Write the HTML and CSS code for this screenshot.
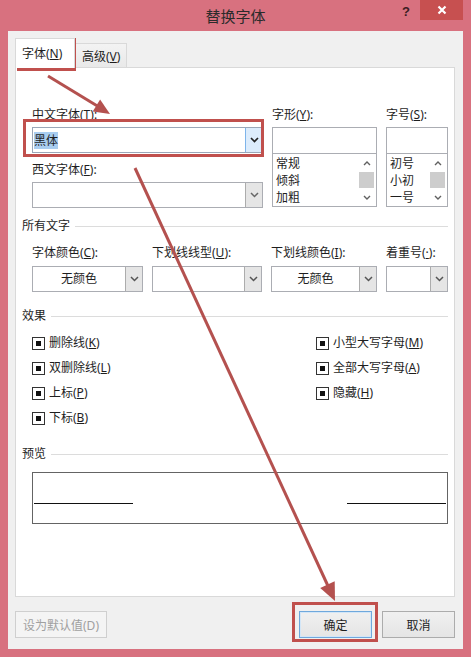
FILE: index.html
```html
<!DOCTYPE html>
<html lang="zh-CN">
<head>
  <meta charset="UTF-8" />
  <title>替换字体</title>
  <link rel="stylesheet" href="styles.css">
</head>
<body>

<div class="window">
  <div class="title-bar">
    <span></span>
    <span class="title">替换字体</span>
    <div class="controls">
      <span class="help">?</span>
      <span class="close">
        <svg width="10" height="10" viewBox="0 0 10 10"><path d="M1.5 1.5l7 7M8.5 1.5l-7 7" stroke="#fff" stroke-width="2.2"/></svg>
      </span>
    </div>
  </div>

  <div class="client">
    <div class="tabs">
      <div class="tab active">字体(<u>N</u>)</div>
      <div class="tab">高级(<u>V</u>)</div>
    </div>

    <div class="panel">
      <!-- police -->
      <div class="font-grid">
        <div class="col">
          <label>中文字体(<u>T</u>):</label>
          <div class="combo focus">
            <span class="val left"><span class="sel">黑体</span></span>
            <span class="arrow"><svg width="9" height="6" viewBox="0 0 9 6"><path d="M1 1l3.5 3.5L8 1" fill="none" stroke="#222" stroke-width="1.7"/></svg></span>
          </div>
          <label class="second">西文字体(<u>F</u>):</label>
          <div class="combo">
            <span class="val"></span>
            <span class="arrow"><svg width="9" height="6" viewBox="0 0 9 6"><path d="M1 1l3.5 3.5L8 1" fill="none" stroke="#666" stroke-width="1.5"/></svg></span>
          </div>
        </div>
        <div class="col">
          <label>字形(<u>Y</u>):</label>
          <div class="field"></div>
          <div class="list">
            <ul>
              <li>常规</li>
              <li>倾斜</li>
              <li>加粗</li>
            </ul>
            <div class="scroll">
              <span class="up"><svg width="8" height="5" viewBox="0 0 8 5"><path d="M1 4l3-3 3 3" fill="none" stroke="#606060" stroke-width="1.4"/></svg></span>
              <span class="thumb"></span>
              <span class="down"><svg width="8" height="5" viewBox="0 0 8 5"><path d="M1 1l3 3 3-3" fill="none" stroke="#606060" stroke-width="1.4"/></svg></span>
            </div>
          </div>
        </div>
        <div class="col">
          <label>字号(<u>S</u>):</label>
          <div class="field"></div>
          <div class="list">
            <ul>
              <li>初号</li>
              <li>小初</li>
              <li>一号</li>
            </ul>
            <div class="scroll">
              <span class="up"><svg width="8" height="5" viewBox="0 0 8 5"><path d="M1 4l3-3 3 3" fill="none" stroke="#606060" stroke-width="1.4"/></svg></span>
              <span class="thumb"></span>
              <span class="down"><svg width="8" height="5" viewBox="0 0 8 5"><path d="M1 1l3 3 3-3" fill="none" stroke="#606060" stroke-width="1.4"/></svg></span>
            </div>
          </div>
        </div>
      </div>

      <!-- tout le texte -->
      <div class="section">所有文字</div>
      <div class="color-grid">
        <div class="col">
          <label>字体颜色(<u>C</u>):</label>
          <div class="combo">
            <span class="val">无颜色</span>
            <span class="arrow"><svg width="9" height="6" viewBox="0 0 9 6"><path d="M1 1l3.5 3.5L8 1" fill="none" stroke="#555" stroke-width="1.5"/></svg></span>
          </div>
        </div>
        <div class="col">
          <label>下划线线型(<u>U</u>):</label>
          <div class="combo">
            <span class="val"></span>
            <span class="arrow"><svg width="9" height="6" viewBox="0 0 9 6"><path d="M1 1l3.5 3.5L8 1" fill="none" stroke="#555" stroke-width="1.5"/></svg></span>
          </div>
        </div>
        <div class="col">
          <label>下划线颜色(<u>I</u>):</label>
          <div class="combo">
            <span class="val">无颜色</span>
            <span class="arrow"><svg width="9" height="6" viewBox="0 0 9 6"><path d="M1 1l3.5 3.5L8 1" fill="none" stroke="#555" stroke-width="1.5"/></svg></span>
          </div>
        </div>
        <div class="col">
          <label>着重号(<u>·</u>):</label>
          <div class="combo">
            <span class="val"></span>
            <span class="arrow"><svg width="9" height="6" viewBox="0 0 9 6"><path d="M1 1l3.5 3.5L8 1" fill="none" stroke="#555" stroke-width="1.5"/></svg></span>
          </div>
        </div>
      </div>

      <!-- effets -->
      <div class="section">效果</div>
      <div class="checks">
        <div class="check"><span class="box"></span><span>删除线(<u>K</u>)</span></div>
        <div class="check"><span class="box"></span><span>双删除线(<u>L</u>)</span></div>
        <div class="check"><span class="box"></span><span>上标(<u>P</u>)</span></div>
        <div class="check"><span class="box"></span><span>下标(<u>B</u>)</span></div>
        <div class="check"><span class="box"></span><span>小型大写字母(<u>M</u>)</span></div>
        <div class="check"><span class="box"></span><span>全部大写字母(<u>A</u>)</span></div>
        <div class="check"><span class="box"></span><span>隐藏(<u>H</u>)</span></div>
      </div>

      <!-- apercu -->
      <div class="section">预览</div>
      <div class="preview">
        <span class="rule"></span>
        <span class="rule"></span>
      </div>
    </div>

    <div class="buttons">
      <button class="btn disabled">设为默认值(D)</button>
      <span class="spacer"></span>
      <button class="btn default">确定</button>
      <button class="btn">取消</button>
    </div>
  </div>

  <!-- annotations -->
  <svg class="marks" width="471" height="657" viewBox="0 0 471 657">
    <g fill="none" stroke="#c0504d" stroke-width="3">
      <rect x="18.5" y="39.5" width="56" height="30"/>
      <rect x="24.5" y="120.5" width="238" height="35"/>
      <rect x="293.5" y="603.5" width="83" height="37"/>
    </g>
    <g stroke="#b4514f" stroke-width="3" fill="#b4514f">
      <line x1="48" y1="76" x2="99" y2="107"/>
      <polygon points="110,114 92.7,111.6 100.1,99.6" stroke="none"/>
      <line x1="135" y1="168" x2="328" y2="586"/>
      <polygon points="335,601 320.2,588 334.7,581.3" stroke="none"/>
    </g>
  </svg>
</div>

</body>
</html>
```

FILE: styles.css
```css
body {
  margin: 0;
  background: #d8717f;
  font-family: "Noto Sans", "Noto Sans CJK SC", sans-serif;
  font-size: 12px;
  color: #1e1e1e;
}
u {
  text-decoration: underline;
  text-underline-offset: 1px;
}
.window {
  position: relative;
  width: 471px;
  height: 657px;
  display: flex;
  flex-direction: column;
}
.title-bar {
  height: 31px;
  flex: none;
  display: grid;
  grid-template-columns: 1fr auto 1fr;
}
.title {
  align-self: center;
  font-size: 15px;
  color: #2b2b2b;
}
.controls {
  justify-self: end;
  align-self: start;
  display: flex;
  margin-right: 8px;
}
.help {
  width: 28px;
  height: 20px;
  line-height: 24px;
  text-align: center;
  font-family: "Liberation Sans", sans-serif;
  font-weight: bold;
  font-size: 13px;
  color: #3b1c22;
}
.close {
  width: 43px;
  height: 20px;
  background: #c75050;
  display: flex;
  align-items: center;
  justify-content: center;
}
.client {
  flex: 1;
  margin: 0 8px 8px;
  background: #f0f0f0;
  padding: 7px 8px 0 7px;
}

/* onglets */
.tabs {
  display: flex;
  align-items: flex-end;
  height: 29px;
}
.tab {
  height: 24px;
  line-height: 26px;
  padding: 0 6px;
  border: 1px solid #d9d9d9;
  border-bottom: none;
  background: linear-gradient(#f3f3f3, #e9e9e9);
  box-sizing: border-box;
}
.tab.active {
  position: relative;
  z-index: 1;
  height: 30px;
  margin-bottom: -1px;
  width: 60px;
  line-height: 30px;
  background: #fff;
}
.panel {
  height: 530px;
  box-sizing: border-box;
  border: 1px solid #d9d9d9;
  background: #fff;
  padding: 0 6px;
}
label {
  display: block;
  line-height: 16px;
  height: 16px;
  white-space: nowrap;
}

/* police */
.font-grid {
  margin: 39px 0 0 10px;
  display: grid;
  grid-template-columns: 231px 105px 62px;
  column-gap: 9px;
}
.font-grid label {
  margin-bottom: 4px;
}
.font-grid label.second {
  margin-top: 9px;
}
.combo {
  height: 26px;
  box-sizing: border-box;
  border: 1px solid #abadb3;
  background: #fff;
  display: flex;
}
.combo .val {
  flex: 1;
  line-height: 24px;
  text-align: center;
}
.combo .val.left {
  text-align: left;
  padding-left: 1px;
  display: flex;
  align-items: center;
}
.combo .sel {
  background: #a9cdf0;
  line-height: 17px;
}
.combo .arrow {
  width: 16px;
  border-left: 1px solid #acacac;
  background: #e5e5e5;
  display: flex;
  align-items: center;
  justify-content: center;
}
.combo.focus {
  border-color: #9aa7b8;
}
.combo.focus .arrow {
  background: #dcecfc;
  border-left-color: #7eb4ea;
}
.field {
  height: 26px;
  box-sizing: border-box;
  border: 1px solid #abadb3;
  border-bottom: none;
}
.list {
  height: 54px;
  box-sizing: border-box;
  border: 1px solid #abadb3;
  display: flex;
}
.list ul {
  flex: 1;
  list-style: none;
  margin: 0;
  padding: 1px 0 0 3px;
}
.list li {
  line-height: 17px;
}
.scroll {
  width: 15px;
  margin-right: 2px;
  display: flex;
  flex-direction: column;
}
.scroll .up,
.scroll .down {
  height: 18px;
  display: flex;
  align-items: center;
  justify-content: center;
}
.scroll .thumb {
  flex: 1;
  background: #cdcdcd;
}

/* sections */
.section {
  display: flex;
  align-items: center;
  gap: 5px;
  line-height: 16px;
  margin-top: 10px;
}
.section::after {
  content: "";
  flex: 1;
  height: 1px;
  background: #dcdcdc;
}
.color-grid {
  margin: 11px 0 0 10px;
  display: grid;
  grid-template-columns: 111px 110px 106px 62px;
  column-gap: 9px;
}
.color-grid label {
  margin-bottom: 5px;
}
.color-grid + .section {
  margin-top: 16px;
}

/* effets */
.checks {
  margin: 11px 0 0 10px;
  display: grid;
  grid-template-columns: 284px 1fr;
  grid-template-rows: repeat(4, 16px);
  grid-auto-flow: column;
  row-gap: 9px;
}
.check {
  display: flex;
  align-items: center;
  gap: 4px;
  line-height: 16px;
  white-space: nowrap;
}
.box {
  width: 13px;
  height: 13px;
  box-sizing: border-box;
  border: 1px solid #333;
  background: #fff;
  display: flex;
  align-items: center;
  justify-content: center;
}
.box::after {
  content: "";
  width: 5px;
  height: 5px;
  background: #111;
}
.checks + .section {
  margin-top: 20px;
}

/* apercu */
.preview {
  margin: 10px 0 0 10px;
  height: 52px;
  box-sizing: border-box;
  border: 1px solid #646464;
  display: flex;
  justify-content: space-between;
  align-items: flex-start;
  padding: 30px 1px 0;
}
.rule {
  width: 99px;
  height: 1px;
  background: #111;
}

/* boutons */
.buttons {
  margin-top: 14px;
  display: flex;
  gap: 10px;
}
.spacer {
  flex: 1;
}
.btn {
  height: 27px;
  width: 73px;
  font-family: inherit;
  font-size: 12px;
  color: #1e1e1e;
  border: 1px solid #acacac;
  background: linear-gradient(#f0f0f0, #e5e5e5);
  padding: 0;
}
.btn.disabled {
  width: 92px;
  color: #a0a0a0;
  border-color: #cfcfcf;
  background: #f4f4f4;
}
.btn.default {
  border-color: #6fa8dc;
  box-shadow: inset 0 0 0 1px #d3e6f7;
}
.marks {
  position: absolute;
  top: 0;
  left: 0;
  pointer-events: none;
}
```
